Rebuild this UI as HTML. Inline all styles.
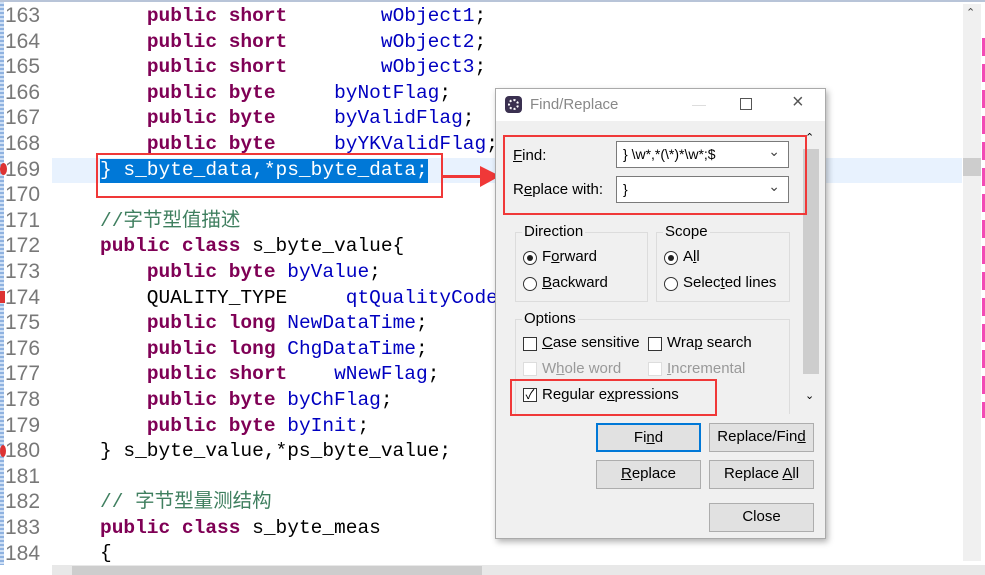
<!DOCTYPE html>
<html><head><meta charset="utf-8"><style>
*{margin:0;padding:0;box-sizing:border-box}
body{width:985px;height:575px;overflow:hidden;background:#fff;position:relative;font-family:"Liberation Sans","Noto Sans CJK SC",sans-serif}
.ln{position:absolute;left:5px;font:21px "Liberation Sans",sans-serif;color:#787878}
.code{position:absolute;left:100px;font:19.5px/25.6px "Liberation Mono","Noto Sans CJK SC",monospace;white-space:pre;color:#000}
.k{color:#7f0055;font-weight:bold}
.v{color:#0000c0}
.c{color:#3f7f5f}
.abs{position:absolute}
.dlg{position:absolute;left:495px;top:88px;width:331px;height:451px;background:#f0f0f0;border:1px solid #aaa;box-shadow:2px 3px 6px rgba(0,0,0,.3);font-size:15px;color:#000}
.inp{position:absolute;background:#fff;border:1px solid #7a7a7a;height:27px;padding:4px 6px;font-size:14px}
.inp span.ch{position:absolute;right:8px;top:1px;color:#444;font-size:14px}
.grp{position:absolute;border:1px solid #dcdcdc}
.grp .t{position:absolute;top:-10px;left:6px;background:#f0f0f0;padding:0 2px}
.rad{position:absolute;width:14px;height:14px;border:1px solid #333;border-radius:50%;background:#fff}
.cb{position:absolute;width:14px;height:14px;border:1px solid #333;background:#fff}
.btn{position:absolute;background:#e1e1e1;border:1px solid #adadad;text-align:center;line-height:26px;font-size:15px}
.red{position:absolute;border:2.5px solid #f03838}
</style></head><body>
<div class="abs" style="left:0;top:0;width:4px;height:565px;background:repeating-linear-gradient(#8fb2e0 0 2px,#cfe0f5 2px 4px)"></div>
<div class="abs" style="left:0;top:0;width:985px;height:2px;background:#b8c4d8"></div>
<div class="abs" style="left:52px;top:158px;width:910px;height:25px;background:#e8f2fe"></div>
<div class="abs" style="left:100px;top:159px;width:328px;height:24px;background:#0078d7"></div>
<div class="ln" style="top:4px">163</div><div class="ln" style="top:30px">164</div><div class="ln" style="top:55px">165</div><div class="ln" style="top:81px">166</div><div class="ln" style="top:106px">167</div><div class="ln" style="top:132px">168</div><div class="ln" style="top:158px">169</div><div class="ln" style="top:183px">170</div><div class="ln" style="top:209px">171</div><div class="ln" style="top:234px">172</div><div class="ln" style="top:260px">173</div><div class="ln" style="top:286px">174</div><div class="ln" style="top:311px">175</div><div class="ln" style="top:337px">176</div><div class="ln" style="top:362px">177</div><div class="ln" style="top:388px">178</div><div class="ln" style="top:414px">179</div><div class="ln" style="top:439px">180</div><div class="ln" style="top:465px">181</div><div class="ln" style="top:490px">182</div><div class="ln" style="top:516px">183</div><div class="ln" style="top:542px">184</div>
<div class="abs" style="left:0;top:163px;width:7px;height:12px;border-radius:50%;background:#d33"></div>
<div class="abs" style="left:0;top:291px;width:5px;height:12px;background:#d33"></div>
<div class="abs" style="left:0;top:445px;width:6px;height:12px;border-radius:50%;background:#d33"></div>
<div class="code" style="top:4px"><span>    </span><span class="k">public short</span>        <span class="v">wObject1</span>;
    <span class="k">public short</span>        <span class="v">wObject2</span>;
    <span class="k">public short</span>        <span class="v">wObject3</span>;
    <span class="k">public byte</span>     <span class="v">byNotFlag</span>;
    <span class="k">public byte</span>     <span class="v">byValidFlag</span>;
    <span class="k">public byte</span>     <span class="v">byYKValidFlag</span>;
<span style="color:#fff">} s_byte_data,*ps_byte_data;</span>

<span class="c">//字节型值描述</span>
<span class="k">public class</span> s_byte_value{
    <span class="k">public byte</span> <span class="v">byValue</span>;
    QUALITY_TYPE     <span class="v">qtQualityCode</span>;
    <span class="k">public long</span> <span class="v">NewDataTime</span>;
    <span class="k">public long</span> <span class="v">ChgDataTime</span>;
    <span class="k">public short</span>    <span class="v">wNewFlag</span>;
    <span class="k">public byte</span> <span class="v">byChFlag</span>;
    <span class="k">public byte</span> <span class="v">byInit</span>;
} s_byte_value,*ps_byte_value;

<span class="c">// 字节型量测结构</span>
<span class="k">public class</span> s_byte_meas
{</div>
<div class="red" style="left:96px;top:153px;width:347px;height:45px"></div>
<div class="abs" style="left:442px;top:175px;width:44px;height:3px;background:#f03838"></div>
<svg class="abs" style="left:480px;top:166px" width="22" height="22"><polygon points="0,0 20,10 0,21" fill="#f03838"/></svg>
<div class="abs" style="left:963px;top:4px;width:18px;height:557px;background:#f0f0f0"></div>
<div class="abs" style="left:963px;top:158px;width:18px;height:18px;background:#cdcdcd"></div>
<div class="abs" style="left:966px;top:6px;font-size:11px;color:#444">&#8963;</div>
<div class="abs" style="left:982px;top:38px;width:3px;height:380px;background:repeating-linear-gradient(#f24bb5 0 18px,#fff 18px 26px)"></div>
<div class="abs" style="left:52px;top:565px;width:933px;height:10px;background:#e8e8e8"></div>
<div class="abs" style="left:72px;top:566px;width:410px;height:9px;background:#cdcdcd"></div>
<div class="dlg">
 <div class="abs" style="left:0;top:0;width:329px;height:32px;background:#fff"></div>
 <div class="abs" style="left:9px;top:7px;width:17px;height:17px;border-radius:4px;background:#3a3050"></div>
 <div class="abs" style="left:12px;top:10px;width:11px;height:11px;border-radius:50%;border:2px dotted #fff"></div>
 <div class="abs" style="left:34px;top:7px;color:#888;font-size:15px">Find/Replace</div>
 <div class="abs" style="left:196px;top:16px;width:14px;height:1px;background:#ddd"></div>
 <div class="abs" style="left:244px;top:9px;width:12px;height:12px;border:1px solid #555"></div>
 <div class="abs" style="left:296px;top:2px;font-size:20px;color:#555">×</div>
 <div class="abs" style="left:306px;top:40px;width:18px;height:281px;background:#f0f0f0"></div>
 <div class="abs" style="left:307px;top:60px;width:16px;height:225px;background:#cdcdcd"></div>
 <div class="abs" style="left:309px;top:42px;font-size:11px">&#8963;</div>
 <div class="abs" style="left:309px;top:300px;font-size:11px">&#8964;</div>
 <div class="abs" style="left:17px;top:58px"><u>F</u>ind:</div>
 <div class="inp" style="left:120px;top:52px;width:173px">} \w*,*(\*)*\w*;$<span class="ch">&#8964;</span></div>
 <div class="abs" style="left:17px;top:92px">R<u>e</u>place with:</div>
 <div class="inp" style="left:120px;top:87px;width:173px">}<span class="ch">&#8964;</span></div>
 <div class="grp" style="left:19px;top:143px;width:133px;height:70px"><span class="t">Direction</span></div>
 <div class="rad" style="left:27px;top:162px"><div style="position:absolute;left:3px;top:3px;width:6px;height:6px;border-radius:50%;background:#222"></div></div>
 <div class="abs" style="left:46px;top:159px">F<u>o</u>rward</div>
 <div class="rad" style="left:27px;top:188px"></div>
 <div class="abs" style="left:46px;top:185px"><u>B</u>ackward</div>
 <div class="grp" style="left:160px;top:143px;width:134px;height:70px"><span class="t">Scope</span></div>
 <div class="rad" style="left:168px;top:162px"><div style="position:absolute;left:3px;top:3px;width:6px;height:6px;border-radius:50%;background:#222"></div></div>
 <div class="abs" style="left:187px;top:159px">A<u>l</u>l</div>
 <div class="rad" style="left:168px;top:188px"></div>
 <div class="abs" style="left:187px;top:185px">Selec<u>t</u>ed lines</div>
 <div class="grp" style="left:19px;top:230px;width:275px;height:95px;border-bottom:none"><span class="t">Options</span></div>
 <div class="cb" style="left:27px;top:248px"></div><div class="abs" style="left:46px;top:245px"><u>C</u>ase sensitive</div>
 <div class="cb" style="left:152px;top:248px"></div><div class="abs" style="left:171px;top:245px">Wra<u>p</u> search</div>
 <div class="cb" style="left:27px;top:273px;border-color:#ddd"></div><div class="abs" style="left:46px;top:271px;color:#999">W<u>h</u>ole word</div>
 <div class="cb" style="left:152px;top:273px;border-color:#ddd"></div><div class="abs" style="left:171px;top:271px;color:#999"><u>I</u>ncremental</div>
 <div class="cb" style="left:27px;top:299px;font-size:13px;line-height:12px;text-align:center">✓</div><div class="abs" style="left:46px;top:297px">Regular e<u>x</u>pressions</div>
 <div class="btn" style="left:100px;top:334px;width:105px;height:29px;border:2px solid #0078d7">Fi<u>n</u>d</div>
 <div class="btn" style="left:213px;top:334px;width:105px;height:29px">Replace/Fin<u>d</u></div>
 <div class="btn" style="left:100px;top:371px;width:105px;height:29px"><u>R</u>eplace</div>
 <div class="btn" style="left:213px;top:371px;width:105px;height:29px">Replace <u>A</u>ll</div>
 <div class="btn" style="left:213px;top:414px;width:105px;height:29px">Close</div>
</div>
<div class="red" style="left:503px;top:135px;width:304px;height:80px"></div>
<div class="red" style="left:510px;top:379px;width:207px;height:37px"></div>
</body></html>
